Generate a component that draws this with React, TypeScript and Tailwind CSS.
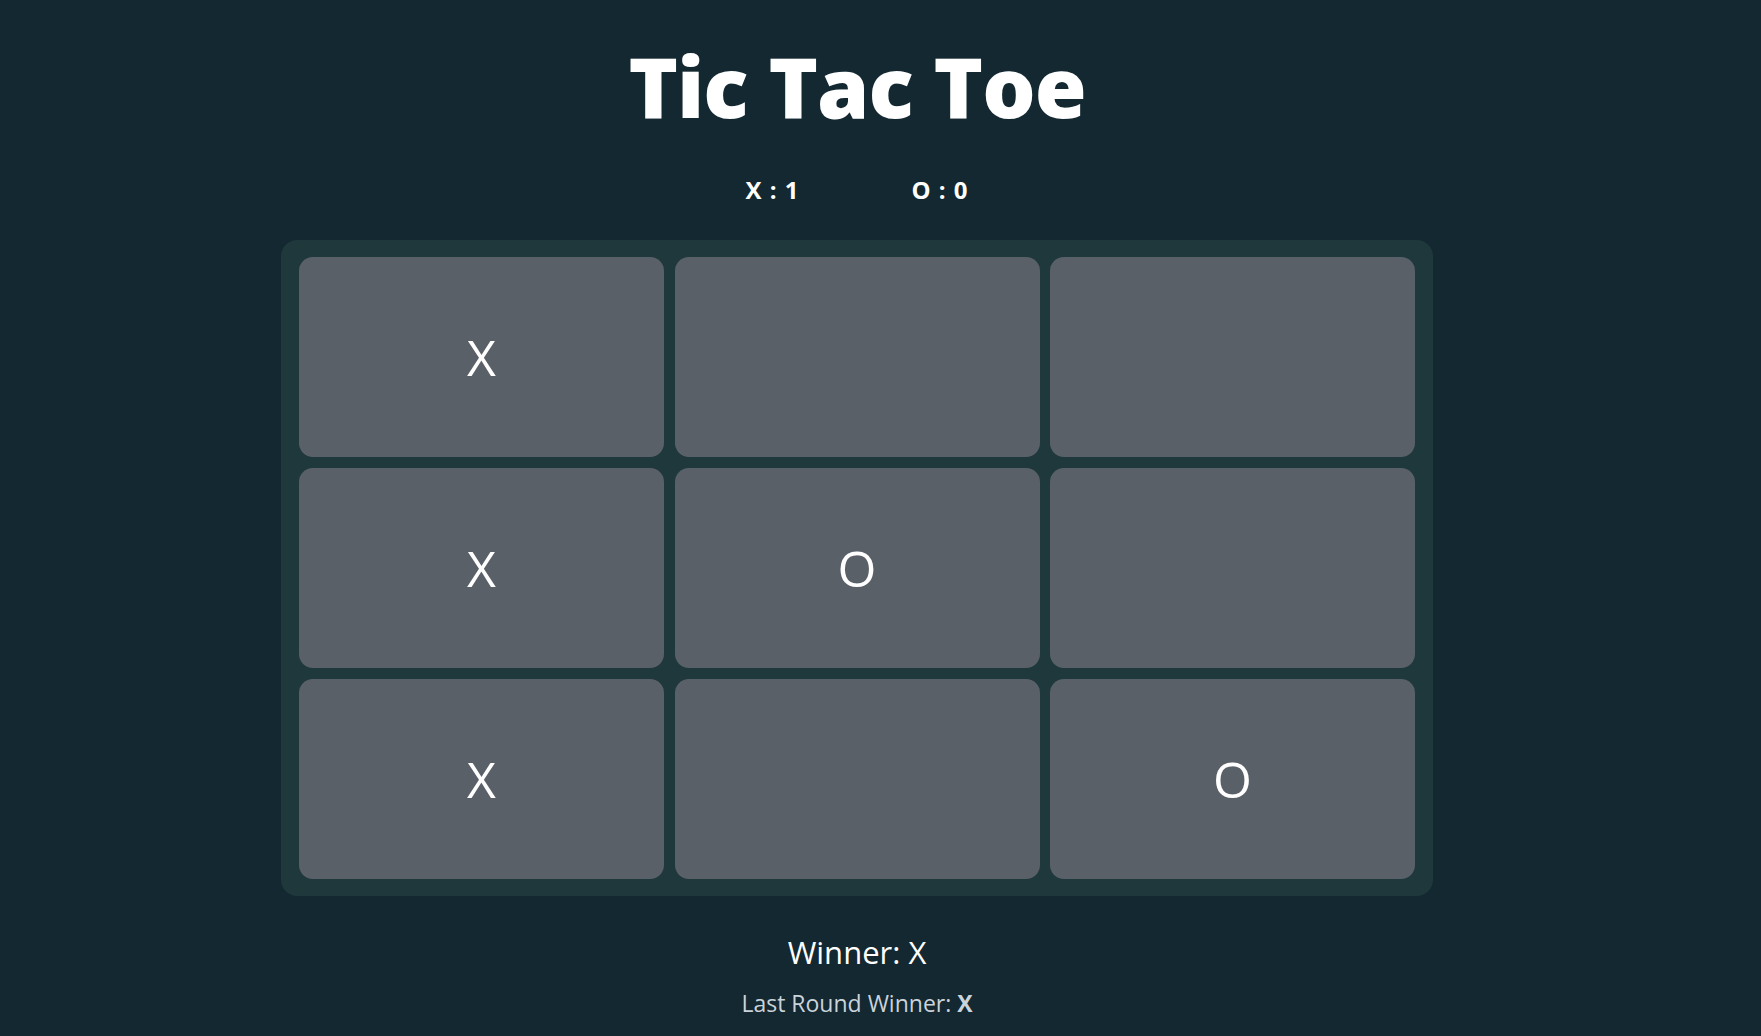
import React from "react";

const board: string[] = ["X", "", "", "X", "O", "", "X", "", "O"];

export default function App() {
  return (
    <div className="min-h-screen w-full bg-[#132831] font-['Open_Sans',sans-serif] text-white">
      <div className="flex w-[1714px] flex-col items-center pt-[44px]">
        <h1 className="text-[84px] font-extrabold leading-none tracking-[-1px]">Tic Tac Toe</h1>
        <div className="mt-[46px] flex gap-[112px] text-2xl font-bold leading-8 tracking-[1px]">
          <span>X : 1</span>
          <span>O : 0</span>
        </div>
        <div className="mt-[34px] grid w-[1152px] grid-cols-3 gap-x-[10.5px] gap-y-[11px] rounded-2xl bg-[#1e383b] px-[18px] py-[17px]">
          {board.map((v, i) => (
            <div
              key={i}
              className="flex h-[200px] items-center justify-center rounded-[14px] bg-[#5a6068] text-[50px] font-normal"
            >
              {v}
            </div>
          ))}
        </div>
        <div className="mt-[36px] text-[31px] leading-10">Winner: X</div>
        <div className="mt-[15px] text-[23px] leading-8 text-[#cbd3da]">
          Last Round Winner: <span className="font-bold">X</span>
        </div>
      </div>
    </div>
  );
}
